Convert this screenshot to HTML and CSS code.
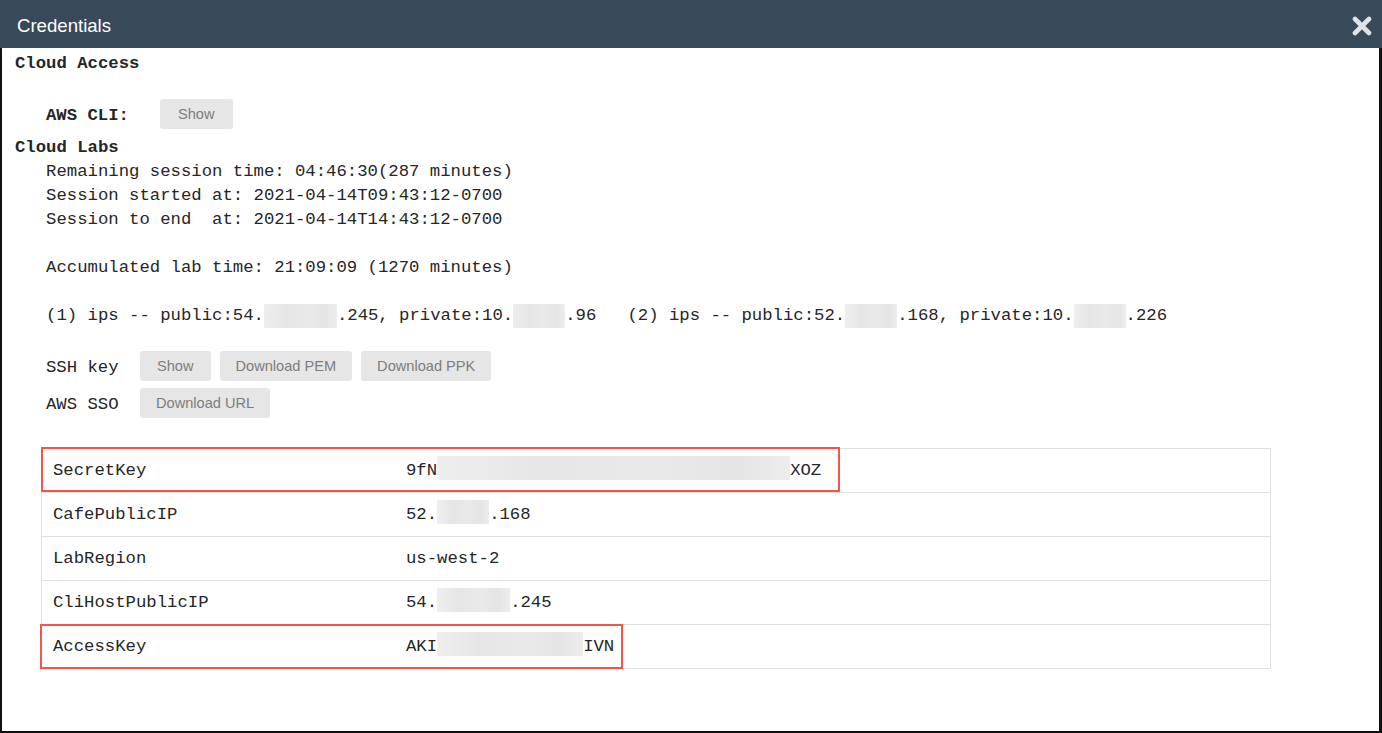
FILE: index.html
```html
<!DOCTYPE html>
<html lang="en">
<head>
<meta charset="utf-8">
<title>Credentials</title>
<link rel="stylesheet" href="styles.css">
</head>
<body>
<div class="dialog">
  <header class="dialog-header">
    <h1 class="dialog-title">Credentials</h1>
    <button class="close-btn" aria-label="Close">
      <svg width="20" height="20" viewBox="0 0 20 20"><path d="M3 3 L17 17 M17 3 L3 17" stroke="#dfe3e7" stroke-width="4.6" stroke-linecap="round" fill="none"/></svg>
    </button>
  </header>
  <div class="dialog-body">
    <div class="section-title">Cloud Access</div>
    <div class="row row-cli">
      <span class="row-label label-bold">AWS CLI:</span>
      <button class="btn">Show</button>
    </div>
    <div class="section-title title-labs">Cloud Labs</div>
<pre class="info">   Remaining session time: 04:46:30(287 minutes)
   Session started at: 2021-04-14T09:43:12-0700
   Session to end  at: 2021-04-14T14:43:12-0700

   Accumulated lab time: 21:09:09 (1270 minutes)

   (1) ips -- public:54.<span class="mask mask-73"></span>.245, private:10.<span class="mask mask-52"></span>.96   (2) ips -- public:52.<span class="mask mask-52"></span>.168, private:10.<span class="mask mask-52"></span>.226</pre>
    <div class="row row-ssh">
      <span class="row-label label-key">SSH key</span>
      <div class="btn-group">
        <button class="btn btn-show">Show</button>
        <button class="btn">Download PEM</button>
        <button class="btn">Download PPK</button>
      </div>
    </div>
    <div class="row row-sso">
      <span class="row-label label-key">AWS SSO</span>
      <div class="btn-group">
        <button class="btn">Download URL</button>
      </div>
    </div>
    <div class="kv">
      <div class="kv-row">
        <div class="kv-key">SecretKey</div>
        <div class="kv-val">9fN<span class="mask mask-353"></span>XOZ</div>
        <div class="highlight hl-secret"></div>
      </div>
      <div class="kv-row">
        <div class="kv-key">CafePublicIP</div>
        <div class="kv-val">52.<span class="mask mask-52"></span>.168</div>
      </div>
      <div class="kv-row">
        <div class="kv-key">LabRegion</div>
        <div class="kv-val">us-west-2</div>
      </div>
      <div class="kv-row">
        <div class="kv-key">CliHostPublicIP</div>
        <div class="kv-val">54.<span class="mask mask-73"></span>.245</div>
      </div>
      <div class="kv-row">
        <div class="kv-key">AccessKey</div>
        <div class="kv-val">AKI<span class="mask mask-146"></span>IVN</div>
        <div class="highlight hl-access"></div>
      </div>
    </div>
  </div>
</div>
</body>
</html>
```
FILE: styles.css
```css
* { box-sizing: border-box; }
html, body { margin: 0; padding: 0; background: #fff; }
body { width: 1382px; height: 733px; overflow: hidden; }

.dialog { width: 1382px; height: 733px; display: flex; flex-direction: column; }

.dialog-header {
  height: 48px;
  flex: none;
  background: #384a5a;
  display: flex;
  align-items: center;
  justify-content: space-between;
  padding: 0 9px 0 17px;
}
.dialog-title {
  margin: 0;
  padding-top: 3px;
  font-family: "Liberation Sans", Arial, sans-serif;
  font-weight: normal;
  font-size: 18.6px;
  color: #fff;
  line-height: 24px;
}
.close-btn {
  border: 0;
  background: transparent;
  padding: 0;
  width: 20px;
  height: 20px;
  display: flex;
  margin-top: 3px;
  margin-right: 1px;
}

.dialog-body {
  flex: 1;
  border-left: 2px solid #111;
  border-right: 3px solid #111;
  border-bottom: 2px solid #111;
  padding: 4px 0 0 13px;
  font-family: "Liberation Mono", "Courier New", monospace;
  font-size: 17.3px;
  color: #262626;
}

.section-title { font-weight: bold; line-height: 24px; }
.title-labs { margin-top: 7px; }

.row { display: flex; align-items: center; padding-left: 31px; height: 30px; }
.row-cli { margin-top: 23px; }
.row-ssh { margin-top: 23px; }
.row-sso { margin-top: 7px; }
.row-label { line-height: 24px; padding-top: 3px; }
.label-bold { font-weight: bold; width: 114px; }
.label-key { width: 94px; }

.btn-group { display: flex; gap: 9px; }
.btn {
  height: 30px;
  padding: 0 16px;
  border: 0;
  border-radius: 3px;
  background: #e6e6e6;
  color: #7d7d7d;
  font-family: "Liberation Sans", Arial, sans-serif;
  font-size: 14.6px;
}
.row-cli .btn { padding: 0 18px; }
.btn-show { padding: 0 17px; }

.info {
  margin: 0;
  font-family: inherit;
  font-size: inherit;
  line-height: 24px;
  color: inherit;
}

.mask {
  display: inline-block;
  height: 24px;
  vertical-align: top;
  background: linear-gradient(90deg, #eeeeee, #e6e6e6 30%, #e9e9e9 60%, #e5e5e5 85%, #ededed);
  border-radius: 1px;
}
.kv .mask { vertical-align: middle; margin-top: -4px; }
.mask-52 { width: 52px; }
.mask-73 { width: 73px; }
.mask-146 { width: 146px; }
.mask-353 { width: 353px; }

.kv {
  margin: 30px 0 0 26px;
  width: 1230px;
  border: 1px solid #e0e0e0;
}
.kv-row {
  position: relative;
  display: grid;
  grid-template-columns: 353px 1fr;
  align-items: center;
  height: 44px;
  padding-left: 11px;
  border-top: 1px solid #e0e0e0;
}
.kv-row:first-child { border-top: 0; height: 43px; }
.kv-key, .kv-val { line-height: 24px; white-space: pre; }

.highlight {
  position: absolute;
  border: 2px solid #f0564a;
  pointer-events: none;
}
.hl-secret { left: -1px; top: -2px; width: 799px; height: 45px; }
.hl-access { left: -2px; top: -1px; width: 583px; height: 45px; }
```
